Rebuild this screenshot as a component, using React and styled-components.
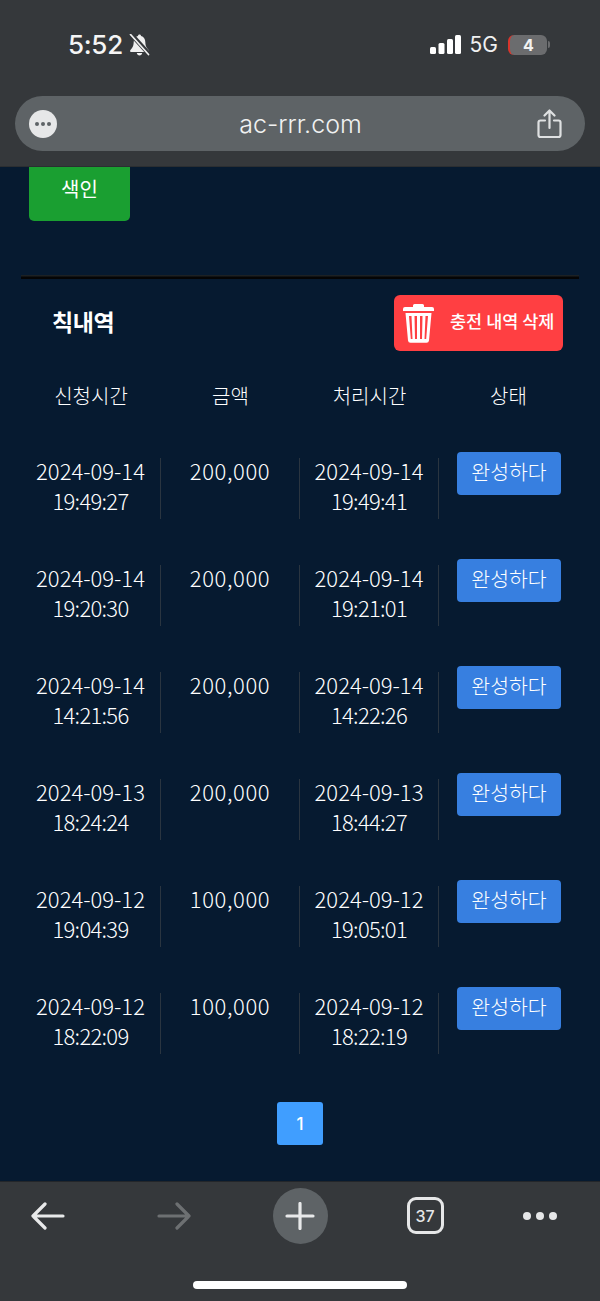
import React from "react";
import styled, { createGlobalStyle } from "styled-components";

const GlobalStyle = createGlobalStyle`
  html, body {
    margin: 0;
    padding: 0;
    background: #061a30;
  }
  body {
    font-family: "Noto Sans CJK KR", "Noto Sans", sans-serif;
    overflow: hidden;
  }
`;

const Screen = styled.div`
  width: 600px;
  height: 1301px;
  display: flex;
  flex-direction: column;
  background: #061a30;
  color: #fff;
  overflow: hidden;
`;

const TopChrome = styled.header`
  height: 167px;
  flex: none;
  box-sizing: border-box;
  background: #35383b;
  border-bottom: 1px solid #2b2e31;
  padding: 26px 15px 0;
`;

const StatusBar = styled.div`
  height: 37px;
  display: flex;
  align-items: center;
  justify-content: space-between;
  padding: 0 35px 0 53px;
  margin-bottom: 33px;
`;

const TimeGroup = styled.div`
  display: flex;
  align-items: center;
  gap: 6px;
`;

const Time = styled.span`
  font-family: Inter, sans-serif;
  font-size: 26px;
  font-weight: 500;
  letter-spacing: -0.3px;
  color: #f5f5f5;
`;

const Signals = styled.div`
  display: flex;
  align-items: center;
`;

const NetLabel = styled.span`
  font-family: Inter, sans-serif;
  font-size: 21px;
  color: #f0f0f0;
  margin: 0 10px 0 9px;
`;

const Battery = styled.div`
  width: 39px;
  height: 20px;
  border-radius: 6px;
  background: #6b6c6e;
  border-left: 2px solid #d8352c;
  box-sizing: border-box;
  display: flex;
  align-items: center;
  justify-content: center;
  font-family: Inter, sans-serif;
  font-size: 16px;
  font-weight: 700;
  color: #f2f2f2;
  margin-right: 1px;
`;

const BatteryCap = styled.div`
  width: 2px;
  height: 7px;
  background: #6b6c6e;
  border-radius: 0 2px 2px 0;
`;

const AddressBar = styled.div`
  height: 55px;
  border-radius: 28px;
  background: #5e6366;
  display: grid;
  grid-template-columns: 1fr auto 1fr;
  align-items: center;
  padding: 0 23px 0 14px;
`;

const DotsBadge = styled.div`
  width: 28px;
  height: 28px;
  border-radius: 50%;
  background: #e6e7e8;
  display: flex;
  align-items: center;
  justify-content: center;
  gap: 2px;
`;

const Dot = styled.i`
  width: ${(p) => p.$size || 4}px;
  height: ${(p) => p.$size || 4}px;
  border-radius: 50%;
  background: ${(p) => p.$color || "#5e6366"};
`;

const Url = styled.span`
  font-family: Inter, sans-serif;
  font-size: 25px;
  font-weight: 300;
  color: #f0f1f1;
  transform: translateX(5px);
`;

const ShareSlot = styled.div`
  display: flex;
  justify-content: flex-end;
`;

const Content = styled.main`
  flex: 1;
  min-height: 0;
  box-sizing: border-box;
  padding: 0 21px;
  display: flex;
  flex-direction: column;
`;

const SearchButton = styled.button`
  width: 101px;
  height: 54px;
  margin-left: 8px;
  padding: 0 0 12px;
  border: 0;
  border-radius: 0 0 5px 5px;
  background: #1a9f31;
  color: #fff;
  font: inherit;
  font-size: 20px;
  flex: none;
`;

const Rule = styled.hr`
  width: 100%;
  height: 4px;
  margin: 54px 0 16px;
  border: 0;
  background: linear-gradient(#1c2124 0, #1c2124 25%, #050505 50%);
  flex: none;
`;

const TitleRow = styled.div`
  display: flex;
  align-items: center;
  justify-content: space-between;
  padding: 0 16px 0 31px;
  height: 56px;
`;

const Title = styled.h2`
  margin: 0;
  padding-bottom: 4px;
  font-size: 23px;
  font-weight: 700;
  letter-spacing: -0.4px;
`;

const DeleteButton = styled.button`
  width: 169px;
  height: 56px;
  border: 0;
  border-radius: 6px;
  background: #ff3f42;
  color: #fff;
  font: inherit;
  font-size: 17.5px;
  font-weight: 500;
  display: flex;
  align-items: center;
  gap: 16px;
  padding: 0 0 0 9px;
  white-space: nowrap;
`;

const DeleteLabel = styled.span`
  padding-bottom: 6px;
`;

const HeadRow = styled.div`
  display: grid;
  grid-template-columns: 140px 139px 139px 139px;
  margin: 16px 0 28px;
  height: 56px;
  align-items: center;
  text-align: center;
  font-size: 20px;
  font-weight: 300;
  color: #fff;
`;

const Rows = styled.div`
  display: flex;
  flex-direction: column;
`;

const Row = styled.div`
  height: 107px;
  display: grid;
  grid-template-columns: 140px 139px 139px 139px;
  font-size: 22px;
  font-weight: 300;
  line-height: 30px;
  text-align: center;
  color: #fff;
`;

const Cell = styled.div`
  height: 61px;
  margin-top: 7px;
  border-right: ${(p) => (p.$last ? "0" : "1px solid #2a3540")};
  box-sizing: border-box;
`;

const DateLine = styled.div`
  margin-top: -3px;
`;

const TimeLine = styled.div`
  letter-spacing: -0.7px;
`;

const Amount = styled.div`
  margin-top: -3px;
  letter-spacing: 0.6px;
`;

const DoneButton = styled.button`
  display: block;
  width: 104px;
  height: 43px;
  margin: -6px 0 0 18px;
  padding: 0 0 5px;
  border: 0;
  border-radius: 4px;
  background: #377fe0;
  color: #fff;
  font: inherit;
  font-size: 20.5px;
  font-weight: 300;
`;

const Pager = styled.div`
  display: flex;
  justify-content: center;
  margin-top: 9px;
`;

const PageButton = styled.button`
  width: 46px;
  height: 43px;
  border: 0;
  border-radius: 3px;
  background: #409eff;
  color: #fff;
  font-family: Inter, sans-serif;
  font-size: 17px;
  font-weight: 500;
`;

const BottomChrome = styled.footer`
  height: 120px;
  flex: none;
  box-sizing: border-box;
  background: #35383b;
  border-top: 1px solid #23262a;
  position: relative;
`;

const ToolRow = styled.nav`
  height: 67px;
  display: grid;
  grid-template-columns: 96px 156px 96px 154px 76px;
  align-items: center;
  justify-items: center;
`;

const PlusCircle = styled.div`
  width: 55px;
  height: 56px;
  border-radius: 50%;
  background: #5e6366;
  display: flex;
  align-items: center;
  justify-content: center;
`;

const TabCount = styled.div`
  width: 37px;
  height: 37px;
  box-sizing: border-box;
  border: 3px solid #e6e7e8;
  border-radius: 9px;
  display: flex;
  align-items: center;
  justify-content: center;
  font-family: Inter, sans-serif;
  font-size: 16px;
  font-weight: 500;
  color: #e6e7e8;
`;

const MoreDots = styled.div`
  width: 34px;
  display: flex;
  justify-content: space-between;
`;

const HomeIndicator = styled.div`
  position: absolute;
  left: 193px;
  top: 99px;
  width: 214px;
  height: 8px;
  border-radius: 4px;
  background: #fff;
`;

const BellOffIcon = () => (
  <svg width="21" height="22" viewBox="0 0 21 22">
    <path fill="#f0f0f0" d="M10.500 0.500c-.9 0-1.500.6-1.600 1.500C6.200 2.700 4.700 5 4.700 8c0 3-.8 5.200-2.400 7-.6.7-1.200 1.200-1.200 1.900 0 .6.500 1.100 1.200 1.100h16.400c.7 0 1.200-.5 1.200-1.100 0-.7-.6-1.200-1.200-1.900-1.600-1.800-2.400-4-2.400-7 0-3-1.500-5.300-4.200-6-.1-.9-.7-1.500-1.600-1.500Z" />
    <path fill="#f0f0f0" d="M7.800 19h5.400c-.2 1.400-1.300 2.500-2.700 2.500S8 20.400 7.800 19Z" />
    <path stroke="#35383b" strokeWidth="4.500" d="M1 -1 20 20" />
    <path stroke="#f0f0f0" strokeWidth="1.700" strokeLinecap="round" d="M1.500 0.500 19.500 20.500" />
  </svg>
);

const SignalIcon = () => (
  <svg width="31" height="19" viewBox="0 0 31 19" fill="#fff">
    <rect x="0" y="12" width="6" height="7" rx="1.500" />
    <rect x="8.500" y="8" width="6" height="11" rx="1.500" />
    <rect x="17" y="4" width="6" height="15" rx="1.500" />
    <rect x="25" y="0" width="6" height="19" rx="1.500" />
  </svg>
);

const ShareIcon = () => (
  <svg width="25" height="30" viewBox="0 0 25 30" fill="none" stroke="#dfe1e2" strokeWidth="2.200" strokeLinecap="round" strokeLinejoin="round">
    <path d="M8 11.500H3.500a2 2 0 0 0-2 2V26a2 2 0 0 0 2 2h18a2 2 0 0 0 2-2V13.500a2 2 0 0 0-2-2H17" />
    <path d="M12.500 19V2M7.500 6.500l5-5 5 5" />
  </svg>
);

const TrashIcon = () => (
  <svg width="31" height="39" viewBox="0 0 31 39" fill="#fff">
    <path d="M11.500 0h8a1.500 1.500 0 0 1 1.500 1.500V3h8a2 2 0 0 1 2 2v2H0V5a2 2 0 0 1 2-2h8V1.500A1.500 1.500 0 0 1 11.500 0Z" />
    <path fillRule="evenodd" d="M2.500 9h26l-2.500 27.500a2.500 2.500 0 0 1-2.500 2.200h-16a2.500 2.500 0 0 1-2.500-2.200ZM6 12l1.800 23h1.700L8.500 12ZM11.500 12l.5 23h2V12ZM17 12v23h2l.5-23ZM22.500 12l-1 23h1.700L25 12Z" />
  </svg>
);

const BackIcon = ({ color = "#e8e9ea", flip }) => (
  <svg width="34" height="28" viewBox="0 0 34 28" fill="none" stroke={color} strokeWidth="3.200" strokeLinecap="round" strokeLinejoin="round" style={flip ? { transform: "scaleX(-1)" } : undefined}>
    <path d="M2 14H32M14 2 2 14 14 26" />
  </svg>
);

const PlusIcon = () => (
  <svg width="30" height="28" viewBox="0 0 30 28" fill="none" stroke="#e8e9ea" strokeWidth="3.200" strokeLinecap="round">
    <path d="M15 1.500v25M2 14h26" />
  </svg>
);

const records = [
  ["2024-09-14", "19:49:27", "200,000", "2024-09-14", "19:49:41"],
  ["2024-09-14", "19:20:30", "200,000", "2024-09-14", "19:21:01"],
  ["2024-09-14", "14:21:56", "200,000", "2024-09-14", "14:22:26"],
  ["2024-09-13", "18:24:24", "200,000", "2024-09-13", "18:44:27"],
  ["2024-09-12", "19:04:39", "100,000", "2024-09-12", "19:05:01"],
  ["2024-09-12", "18:22:09", "100,000", "2024-09-12", "18:22:19"],
];

export default function App() {
  return (
    <Screen>
      <GlobalStyle />
      <TopChrome>
        <StatusBar>
          <TimeGroup>
            <Time>5:52</Time>
            <BellOffIcon />
          </TimeGroup>
          <Signals>
            <SignalIcon />
            <NetLabel>5G</NetLabel>
            <Battery>4</Battery>
            <BatteryCap />
          </Signals>
        </StatusBar>
        <AddressBar>
          <DotsBadge>
            <Dot />
            <Dot />
            <Dot />
          </DotsBadge>
          <Url>ac-rrr.com</Url>
          <ShareSlot>
            <ShareIcon />
          </ShareSlot>
        </AddressBar>
      </TopChrome>

      <Content>
        <SearchButton>색인</SearchButton>
        <Rule />
        <TitleRow>
          <Title>칙내역</Title>
          <DeleteButton>
            <TrashIcon />
            <DeleteLabel>충전 내역 삭제</DeleteLabel>
          </DeleteButton>
        </TitleRow>
        <HeadRow>
          <span>신청시간</span>
          <span>금액</span>
          <span>처리시간</span>
          <span>상태</span>
        </HeadRow>
        <Rows>
          {records.map((r, i) => (
            <Row key={i}>
              <Cell>
                <DateLine>{r[0]}</DateLine>
                <TimeLine>{r[1]}</TimeLine>
              </Cell>
              <Cell>
                <Amount>{r[2]}</Amount>
              </Cell>
              <Cell>
                <DateLine>{r[3]}</DateLine>
                <TimeLine>{r[4]}</TimeLine>
              </Cell>
              <Cell $last>
                <DoneButton>완성하다</DoneButton>
              </Cell>
            </Row>
          ))}
        </Rows>
        <Pager>
          <PageButton>1</PageButton>
        </Pager>
      </Content>

      <BottomChrome>
        <ToolRow>
          <BackIcon />
          <BackIcon color="#6d7072" flip />
          <PlusCircle>
            <PlusIcon />
          </PlusCircle>
          <TabCount>37</TabCount>
          <MoreDots>
            <Dot $size={8} $color="#e6e7e8" />
            <Dot $size={8} $color="#e6e7e8" />
            <Dot $size={8} $color="#e6e7e8" />
          </MoreDots>
        </ToolRow>
        <HomeIndicator />
      </BottomChrome>
    </Screen>
  );
}
